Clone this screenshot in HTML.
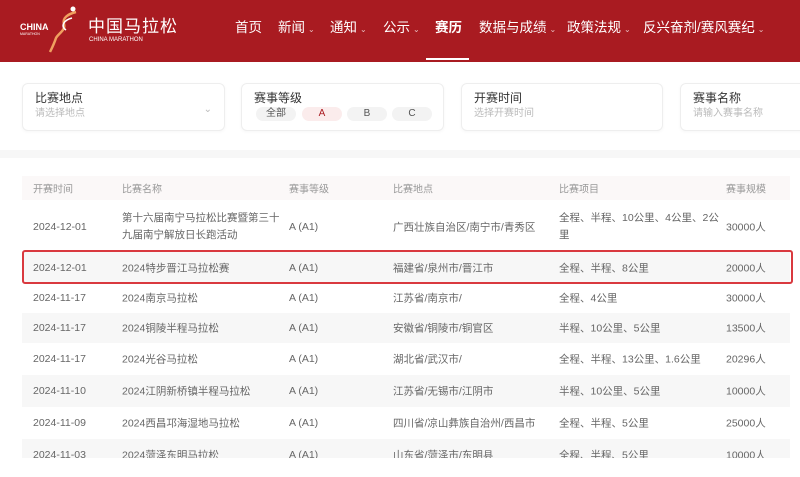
<!DOCTYPE html>
<html><head><meta charset="utf-8"><style>
*{margin:0;padding:0;box-sizing:border-box}
body{width:800px;height:477px;overflow:hidden;background:#fff;font-family:"Liberation Sans","Noto Sans CJK SC",sans-serif;position:relative;color:#555}
.hdr{position:absolute;left:0;top:0;width:800px;height:62px;background:#a91b21}
.a{position:absolute;white-space:nowrap}
.nav{color:#fff;font-size:13.5px;top:19px;line-height:18px}
.nav .c{font-size:8px;opacity:.7;margin-left:3px}
.card{position:absolute;top:83px;height:48px;border:1px solid #eee;border-radius:6px;background:#fff;box-shadow:0 1px 3px rgba(0,0,0,.04)}
.card .t{position:absolute;left:12px;top:6px;font-size:12px;line-height:16px;color:#333}
.card .p{position:absolute;left:12px;top:23px;font-size:10px;line-height:14px;color:#bbb}
.pill{position:absolute;top:23px;height:14px;width:40px;border-radius:7px;background:#f3f3f3;font-size:10px;text-align:center;line-height:14px;color:#555}
.row{position:absolute;left:22px;width:768px;font-size:10.5px;color:#666}
.row span{position:absolute;top:50%;transform:translateY(-50%)}
</style></head><body>
<div class="hdr"></div>
<svg class="a" style="left:18px;top:4px" width="60" height="50" viewBox="0 0 60 50">
<text x="2" y="26" font-size="9" fill="#fff" font-family="Liberation Sans" font-weight="bold">CHINA</text>
<text x="2" y="31" font-size="3.5" fill="#fff" font-family="Liberation Sans">MARATHON</text>
<path d="M58 8 C50 10 44 14 46 20 C48 26 40 30 38 34 C36 40 34 44 32 48" stroke="#f0a060" stroke-width="2.5" fill="none"/>
<path d="M54 14 C46 16 42 22 48 26" stroke="#fff" stroke-width="1.5" fill="none"/>
<circle cx="55" cy="5" r="2.5" fill="#fff"/>
</svg>
<div class="a" style="left:88px;top:12px;color:#fff;font-size:17px;letter-spacing:1px">中国马拉松</div>
<div class="a" style="left:89px;top:37px;color:#fff;font-size:6px">CHINA MARATHON</div>
<div class="a nav" style="left:235px">首页</div>
<div class="a nav" style="left:278px">新闻<span class="c">⌄</span></div>
<div class="a nav" style="left:330px">通知<span class="c">⌄</span></div>
<div class="a nav" style="left:383px">公示<span class="c">⌄</span></div>
<div class="a nav" style="left:435px;font-weight:bold">赛历</div>
<div class="a" style="left:426px;top:58px;width:43px;height:2px;background:#fff"></div>
<div class="a nav" style="left:479px">数据与成绩<span class="c">⌄</span></div>
<div class="a nav" style="left:567px">政策法规<span class="c">⌄</span></div>
<div class="a nav" style="left:643px">反兴奋剂/赛风赛纪<span class="c">⌄</span></div>

<div class="card" style="left:22px;width:203px"><div class="t">比赛地点</div><div class="p">请选择地点</div><div class="a" style="right:12px;top:20px;font-size:10px;color:#bbb">⌄</div></div>
<div class="card" style="left:241px;width:203px"><div class="t">赛事等级</div>
<div class="pill" style="left:14px">全部</div><div class="pill" style="left:60px;background:#fbecec;color:#a91b21">A</div><div class="pill" style="left:105px">B</div><div class="pill" style="left:150px">C</div></div>
<div class="card" style="left:461px;width:202px"><div class="t">开赛时间</div><div class="p">选择开赛时间</div></div>
<div class="card" style="left:680px;width:130px"><div class="t">赛事名称</div><div class="p">请输入赛事名称</div></div>
<div class="a" style="left:0;top:150px;width:800px;height:8px;background:#f7f7f7"></div>

<div class="row" style="top:176px;height:24px;background:#fbf8f8;color:#999;font-size:10px"><span style="left:11px">开赛时间</span><span style="left:100px">比赛名称</span><span style="left:267px">赛事等级</span><span style="left:371px">比赛地点</span><span style="left:537px">比赛项目</span><span style="left:704px">赛事规模</span></div>
<div class="row" style="top:202px;height:50px"><span style="left:11px">2024-12-01</span><span style="left:100px;line-height:17px">第十六届南宁马拉松比赛暨第三十<br>九届南宁解放日长跑活动</span><span style="left:267px">A (A1)</span><span style="left:371px">广西壮族自治区/南宁市/青秀区</span><span style="left:537px;line-height:17px">全程、半程、10公里、4公里、2公<br>里</span><span style="left:704px">30000人</span></div>
<div class="row" style="top:252px;height:31px;background:#f7f7f7"><span style="left:11px">2024-12-01</span><span style="left:100px">2024特步晋江马拉松赛</span><span style="left:267px">A (A1)</span><span style="left:371px">福建省/泉州市/晋江市</span><span style="left:537px">全程、半程、8公里</span><span style="left:704px">20000人</span></div>
<div class="a" style="left:22px;top:250px;width:771px;height:34px;border:2px solid #d9393f;border-radius:3px"></div>
<div class="row" style="top:283px;height:30px"><span style="left:11px">2024-11-17</span><span style="left:100px">2024南京马拉松</span><span style="left:267px">A (A1)</span><span style="left:371px">江苏省/南京市/</span><span style="left:537px">全程、4公里</span><span style="left:704px">30000人</span></div>
<div class="row" style="top:313px;height:30px;background:#f7f7f7"><span style="left:11px">2024-11-17</span><span style="left:100px">2024铜陵半程马拉松</span><span style="left:267px">A (A1)</span><span style="left:371px">安徽省/铜陵市/铜官区</span><span style="left:537px">半程、10公里、5公里</span><span style="left:704px">13500人</span></div>
<div class="row" style="top:343px;height:32px"><span style="left:11px">2024-11-17</span><span style="left:100px">2024光谷马拉松</span><span style="left:267px">A (A1)</span><span style="left:371px">湖北省/武汉市/</span><span style="left:537px">全程、半程、13公里、1.6公里</span><span style="left:704px">20296人</span></div>
<div class="row" style="top:375px;height:32px;background:#f7f7f7"><span style="left:11px">2024-11-10</span><span style="left:100px">2024江阴新桥镇半程马拉松</span><span style="left:267px">A (A1)</span><span style="left:371px">江苏省/无锡市/江阴市</span><span style="left:537px">半程、10公里、5公里</span><span style="left:704px">10000人</span></div>
<div class="row" style="top:407px;height:32px"><span style="left:11px">2024-11-09</span><span style="left:100px">2024西昌邛海湿地马拉松</span><span style="left:267px">A (A1)</span><span style="left:371px">四川省/凉山彝族自治州/西昌市</span><span style="left:537px">全程、半程、5公里</span><span style="left:704px">25000人</span></div>
<div class="row" style="top:439px;height:19px;background:#f7f7f7;overflow:hidden"><span style="left:11px;top:16px">2024-11-03</span><span style="left:100px;top:16px">2024菏泽东明马拉松</span><span style="left:267px;top:16px">A (A1)</span><span style="left:371px;top:16px">山东省/菏泽市/东明县</span><span style="left:537px;top:16px">全程、半程、5公里</span><span style="left:704px;top:16px">10000人</span></div>
</body></html>
